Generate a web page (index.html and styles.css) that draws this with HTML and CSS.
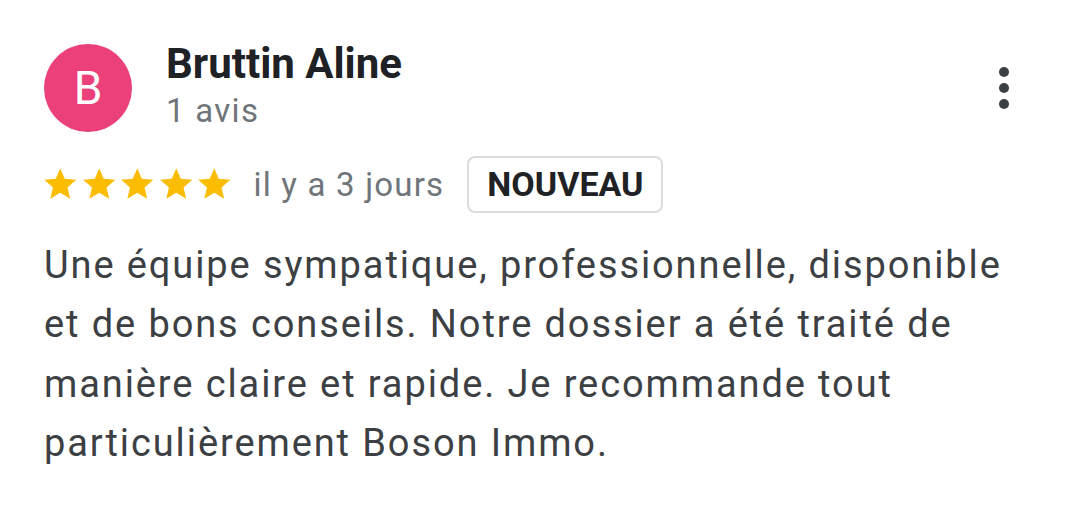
FILE: index.html
```html
<!DOCTYPE html>
<html lang="fr">
<head>
    <meta charset="UTF-8">
    <meta name="viewport" content="width=device-width, initial-scale=1.0">
    <title>Avis</title>
    <link rel="stylesheet" href="styles.css">
</head>
<body>
    <div class="review">
        <div class="head">
            <div class="avatar">B</div>
            <div class="who">
                <div class="name">Bruttin Aline</div>
                <div class="count">1 avis</div>
            </div>
            <div class="more">
                <span></span>
                <span></span>
                <span></span>
            </div>
        </div>
        <div class="meta">
            <div class="stars">
                <svg viewBox="0 0 24 24"><path d="M12 17.27L18.18 21l-1.64-7.03L22 9.24l-7.19-.61L12 2 9.19 8.63 2 9.24l5.46 4.73L5.82 21z"/></svg>
                <svg viewBox="0 0 24 24"><path d="M12 17.27L18.18 21l-1.64-7.03L22 9.24l-7.19-.61L12 2 9.19 8.63 2 9.24l5.46 4.73L5.82 21z"/></svg>
                <svg viewBox="0 0 24 24"><path d="M12 17.27L18.18 21l-1.64-7.03L22 9.24l-7.19-.61L12 2 9.19 8.63 2 9.24l5.46 4.73L5.82 21z"/></svg>
                <svg viewBox="0 0 24 24"><path d="M12 17.27L18.18 21l-1.64-7.03L22 9.24l-7.19-.61L12 2 9.19 8.63 2 9.24l5.46 4.73L5.82 21z"/></svg>
                <svg viewBox="0 0 24 24"><path d="M12 17.27L18.18 21l-1.64-7.03L22 9.24l-7.19-.61L12 2 9.19 8.63 2 9.24l5.46 4.73L5.82 21z"/></svg>
            </div>
            <span class="date">il y a 3 jours</span>
            <span class="badge">NOUVEAU</span>
        </div>
        <p class="text">Une équipe sympatique, professionnelle, disponible et de bons conseils. Notre dossier a été traité de manière claire et rapide. Je recommande tout particulièrement Boson Immo.</p>
    </div>
</body>
</html>
```

FILE: styles.css
```css
*{
    margin: 0;
    padding: 0;
    box-sizing: border-box;
}
body{
    background: #fff;
    font-family: Roboto, "Noto Sans", sans-serif;
}
.review{
    width: 1080px;
    padding: 44px 44px 0 44px;
}
.review .head{
    display: flex;
    align-items: flex-start;
}
.review .avatar{
    width: 88px;
    height: 88px;
    border-radius: 50%;
    background: #ec407a;
    color: #fff;
    font-size: 46px;
    display: flex;
    align-items: center;
    justify-content: center;
    flex-shrink: 0;
}
.review .who{
    flex: 1;
    margin-left: 34px;
}
.review .name{
    font-size: 42px;
    font-weight: 700;
    color: #202124;
    line-height: 40px;
}
.review .count{
    font-size: 33px;
    letter-spacing: 1.3px;
    color: #70757a;
    line-height: 53px;
}
.review .more{
    display: flex;
    flex-direction: column;
    gap: 6px;
    margin-top: 23px;
    margin-right: 27px;
}
.review .more span{
    width: 10px;
    height: 10px;
    border-radius: 50%;
    background: #3c4043;
}
.review .meta{
    display: flex;
    align-items: center;
    margin-top: 19px;
}
.review .stars{
    display: flex;
    margin-left: -3px;
}
.review .stars svg{
    width: 38.5px;
    height: 38.5px;
    fill: #fbbc04;
}
.review .date{
    font-size: 33px;
    letter-spacing: 1.2px;
    color: #70757a;
    margin-left: 20px;
}
.review .badge{
    margin-left: 23px;
    border: 2px solid #dadce0;
    border-radius: 8px;
    padding: 0 18px;
    height: 57px;
    line-height: 53px;
    font-size: 34px;
    font-weight: 700;
    color: #202124;
}
.review .text{
    margin-top: 23px;
    font-size: 38px;
    letter-spacing: 1.9px;
    line-height: 59.3px;
    color: #3c4043;
    width: 985px;
}
```
